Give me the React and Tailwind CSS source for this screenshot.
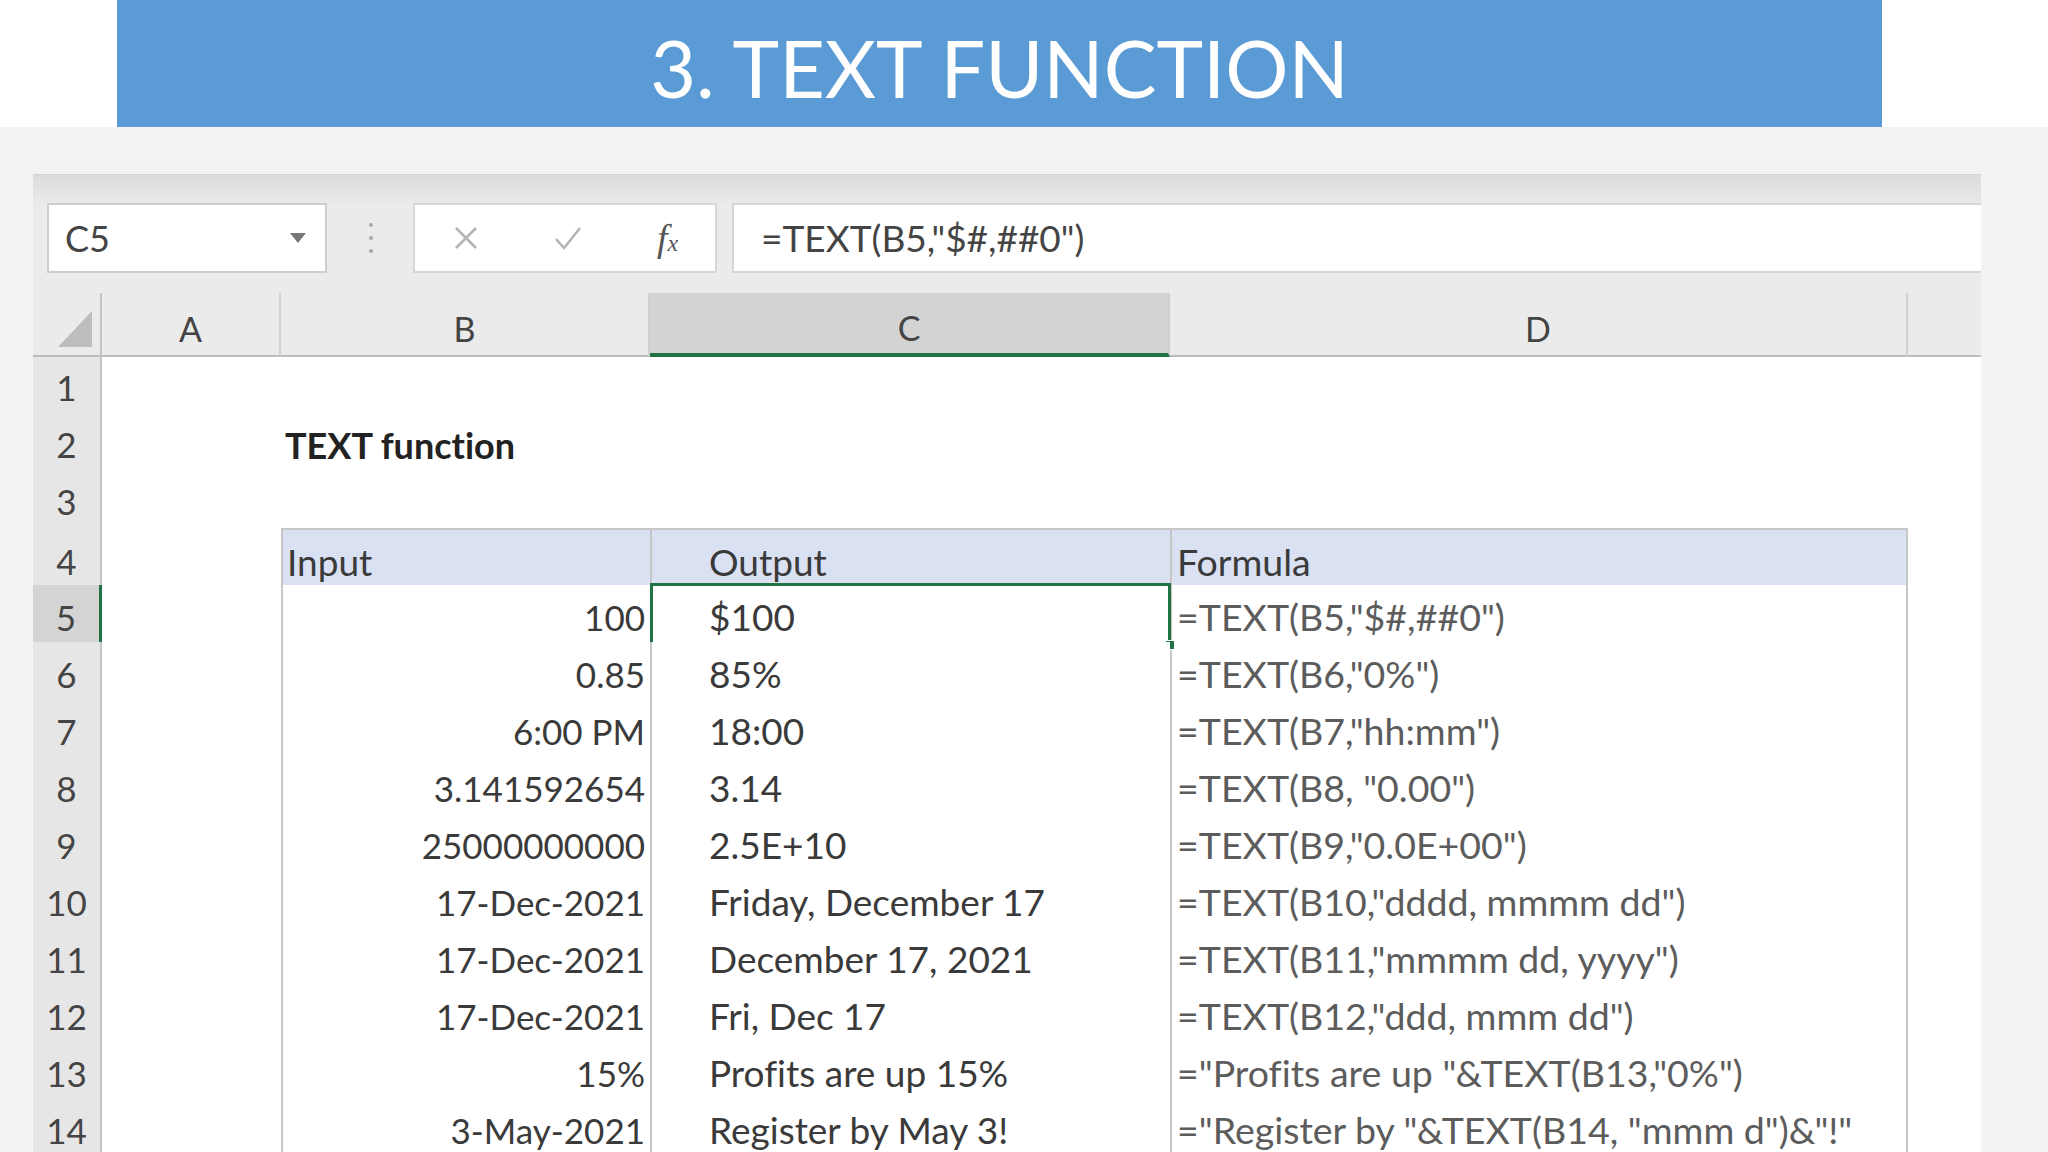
import React from "react";

const rows = [
  { n: 1 },
  { n: 2, title: "TEXT function" },
  { n: 3 },
  { n: 4, head: true, b: "Input", c: "Output", d: "Formula" },
  { n: 5, b: "100", c: "$100", d: '=TEXT(B5,"$#,##0")' },
  { n: 6, b: "0.85", c: "85%", d: '=TEXT(B6,"0%")' },
  { n: 7, b: "6:00 PM", c: "18:00", d: '=TEXT(B7,"hh:mm")' },
  { n: 8, b: "3.141592654", c: "3.14", d: '=TEXT(B8, "0.00")' },
  { n: 9, b: "25000000000", c: "2.5E+10", d: '=TEXT(B9,"0.0E+00")' },
  { n: 10, b: "17-Dec-2021", c: "Friday, December 17", d: '=TEXT(B10,"dddd, mmmm dd")' },
  { n: 11, b: "17-Dec-2021", c: "December 17, 2021", d: '=TEXT(B11,"mmmm dd, yyyy")' },
  { n: 12, b: "17-Dec-2021", c: "Fri, Dec 17", d: '=TEXT(B12,"ddd, mmm dd")' },
  { n: 13, b: "15%", c: "Profits are up 15%", d: '="Profits are up "&TEXT(B13,"0%")' },
  { n: 14, b: "3-May-2021", c: "Register by May 3!", d: '="Register by "&TEXT(B14, "mmm d")&"!"' },
];

const grid = "grid grid-cols-[69px_179px_369px_520px_738px_73px]";

const Row = ({ row }) => {
  const inTable = row.n >= 4;
  const selected = row.n === 5;
  const top = row.head ? "border-t-2" : "";
  const cell = inTable
    ? `border-l-2 border-b-2 border-[#c6c6c6] ${top}`
    : "";
  const bg = row.head ? "bg-[#d9e1f2]" : "bg-white";

  return (
    <div className={`${grid} h-[57px]`}>
      <div
        className={`flex items-center justify-center pt-1 border-b border-[#cfcfcf] text-[35px] text-[#444] ${
          selected
            ? "bg-[#d4d4d4] border-r-[3px] border-r-[#217346]"
            : "bg-[#e6e6e6] border-r-2 border-r-[#c4c4c4]"
        }`}
      >
        {row.n}
      </div>
      <div className="bg-white" />
      <div
        className={`flex items-center pt-1 ${inTable ? bg : "bg-white"} ${cell} ${
          row.head || row.title ? "justify-start pl-[4px]" : "justify-end pr-[5px]"
        } ${
          row.title
            ? "font-bold text-[#222] text-[36px]"
            : row.head
            ? "text-[#3a3a3a] text-[37px]"
            : "text-[#3a3a3a] text-[35px]"
        }`}
      >
        {row.title || row.b}
      </div>
      <div
        className={`relative flex items-center pt-1 pl-[57px] text-[37px] text-[#3a3a3a] ${
          inTable ? bg : "bg-white"
        } ${cell}`}
      >
        {row.c}
        {selected && (
          <div className="absolute -left-[2px] -top-[2px] -right-[1px] -bottom-[1px] border-[3px] border-[#217346]">
            <div className="absolute -bottom-[7px] -right-[7px] h-[10px] w-[10px] bg-[#217346] border border-white" />
          </div>
        )}
      </div>
      <div
        className={`flex items-center pt-1 pl-[5px] text-[37.5px] ${
          row.head ? "text-[#3a3a3a]" : "text-[#5c5c5c]"
        } ${inTable ? `${bg} ${cell} border-r-2` : "bg-white"}`}
      >
        {row.d}
      </div>
      <div className="bg-white" />
    </div>
  );
};

const App = () => {
  const colHeads = ["A", "B", "C", "D", ""];

  return (
    <div className="w-[2048px] h-[1152px] overflow-hidden bg-[#f3f3f3] font-['Lato',sans-serif] [font-variant-ligatures:none]">
      {/* Title banner */}
      <div className="h-[127px] bg-white">
        <div className="ml-[117px] w-[1765px] h-full bg-[#5b9bd5] flex items-center justify-center pt-[8px]">
          <h1 className="text-[79px] text-white font-normal leading-none">
            3. TEXT FUNCTION
          </h1>
        </div>
      </div>

      {/* Excel window */}
      <div className="mt-[47px] ml-[33px] w-[1948px] bg-[#ebebeb] border-t border-[#d4d4d4]">
        {/* Formula bar */}
        <div className="h-[118px] flex items-start pt-[28px] pl-[14px] bg-[linear-gradient(to_bottom,#dcdcdc,#ebebeb_30px)]">
          <div className="w-[280px] h-[70px] bg-white border-2 border-[#cdcdcd] flex items-center justify-between pl-[16px] pr-[18px]">
            <span className="text-[36px] text-[#444]">C5</span>
            <svg width="18" height="12" viewBox="0 0 18 12">
              <path d="M1 1 L17 1 L9 11 Z" fill="#777" />
            </svg>
          </div>
          <div className="ml-[42px] mt-[20px] flex flex-col gap-[9px]">
            <div className="h-[4px] w-[4px] rounded-full bg-[#a8a8a8]" />
            <div className="h-[4px] w-[4px] rounded-full bg-[#a8a8a8]" />
            <div className="h-[4px] w-[4px] rounded-full bg-[#a8a8a8]" />
          </div>
          <div className="ml-[40px] w-[304px] h-[70px] bg-white border-2 border-[#d6d6d6] flex items-center justify-around">
            <svg width="28" height="28" viewBox="0 0 28 28">
              <path d="M4 4 L24 24 M24 4 L4 24" stroke="#b4b4b4" strokeWidth="2.5" />
            </svg>
            <svg width="30" height="28" viewBox="0 0 30 28">
              <path d="M3 15 L11 24 L27 4" stroke="#b4b4b4" strokeWidth="2.5" fill="none" />
            </svg>
            <span className="font-['Liberation_Serif',serif] italic text-[38px] text-[#555] leading-none">
              f<span className="text-[24px]">x</span>
            </span>
          </div>
          <div className="ml-[15px] flex-1 h-[70px] bg-white border-y-2 border-l-2 border-[#d6d6d6] flex items-center pl-[27px]">
            <span className="text-[37px] text-[#444]">=TEXT(B5,"$#,##0")</span>
          </div>
        </div>

        {/* Column headers */}
        <div className={`${grid} h-[64px] text-[34px] text-[#444]`}>
          <div className="flex items-end justify-end pr-[8px] pb-[8px] border-r-2 border-[#c4c4c4] border-b-2 border-b-[#bdbdbd]">
            <svg width="34" height="36" viewBox="0 0 34 36">
              <path d="M34 0 L34 36 L0 36 Z" fill="#bdbdbd" />
            </svg>
          </div>
          {colHeads.map((c, i) => (
            <div
              key={i}
              className={`flex items-center justify-center pt-[8px] ${
                c === "C"
                  ? "bg-[#d3d3d3] border-b-4 border-[#217346]"
                  : "border-b-2 border-[#bdbdbd]"
              } ${i < 4 ? "border-r-2 border-r-[#d0d0d0]" : ""}`}
            >
              {c}
            </div>
          ))}
        </div>

        {/* Rows */}
        <div>
          {rows.map((row) => (
            <Row key={row.n} row={row} />
          ))}
        </div>
      </div>
    </div>
  );
};

export default App;
